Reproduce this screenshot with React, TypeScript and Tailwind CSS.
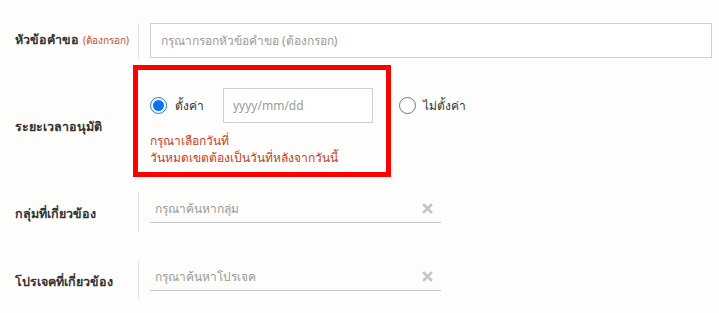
import React from 'react';

const ClearIcon = () => (
  <svg width="11" height="11" viewBox="0 0 11 11" className="text-[#c4c4c4]">
    <path d="M2 2 L9 9 M9 2 L2 9" stroke="currentColor" strokeWidth="2.6" strokeLinecap="square" />
  </svg>
);

const Radio = ({ checked }: { checked?: boolean }) => (
  <span
    className={
      checked
        ? 'flex items-center justify-center w-[17px] h-[17px] rounded-full border border-[#1a73e8] bg-white'
        : 'flex items-center justify-center w-[17px] h-[17px] rounded-full border border-[#767676] bg-white'
    }
  >
    {checked && <span className="block w-[11px] h-[11px] rounded-full bg-[#0b74f0]" />}
  </span>
);

const Label = ({ children, offset }: { children: React.ReactNode; offset?: boolean }) => (
  <div
    className={
      offset
        ? 'w-[138px] shrink-0 flex items-center pl-[15px] pt-[5px] text-[12.5px] font-bold text-[#333]'
        : 'w-[138px] shrink-0 flex items-center pl-[15px] text-[12.5px] font-bold text-[#333]'
    }
  >
    {children}
  </div>
);

const SearchInput = ({ placeholder }: { placeholder: string }) => (
  <div className="w-[291px] h-[28px] flex items-center justify-between border-b border-[#c8c8c8] pl-[5px] pr-[8px]">
    <span className="text-[12px] text-[#9a9a9a]">{placeholder}</span>
    <ClearIcon />
  </div>
);

export default function App() {
  return (
    <div
      className="w-[719px] h-[313px] bg-[#fdfdfb] pr-[7px] overflow-hidden"
      style={{ fontFamily: '"Noto Sans", "Liberation Sans", sans-serif' }}
    >
      {/* หัวข้อคำขอ */}
      <div className="flex h-[35px] mt-[23px]">
        <Label>
          หัวข้อคำขอ <span className="ml-1 text-[10px] font-normal text-[#c9453a]">(ต้องกรอก)</span>
        </Label>
        <div className="border-l border-[#e2e2e2] pl-[11px] flex-1">
          <div className="h-[35px] border border-[#cfcfcf] bg-white flex items-center px-[10px] text-[12px] text-[#9a9a9a]">
            กรุณากรอกหัวข้อคำขอ (ต้องกรอก)
          </div>
        </div>
      </div>

      {/* ระยะเวลาอนุมัติ */}
      <div className="flex mt-[30px] relative">
        <Label>ระยะเวลาอนุมัติ</Label>
        <div className="pl-[12px]">
          <div className="flex items-center h-[35px]">
            <Radio checked />
            <span className="ml-[8px] w-[48px] text-[12px] text-[#333]">ตั้งค่า</span>
            <div className="w-[150px] h-[35px] border border-[#cfcfcf] bg-white flex items-center px-[9px] text-[12px] text-[#9a9a9a]">
              yyyy/mm/dd
            </div>
            <span className="ml-[26px]">
              <Radio />
            </span>
            <span className="ml-[7px] text-[12px] text-[#333]">ไม่ตั้งค่า</span>
          </div>
          <div className="mt-[9px] text-[12px] leading-[17px] text-[#cc3a1e]">
            <div>กรุณาเลือกวันที่</div>
            <div>วันหมดเขตต้องเป็นวันที่หลังจากวันนี้</div>
          </div>
        </div>
        <div className="absolute left-[133px] top-[-23px] w-[258px] h-[112px] border-[5px] border-[#ff0000] pointer-events-none" />
      </div>

      {/* กลุ่มที่เกี่ยวข้อง */}
      <div className="flex h-[40px] mt-[26px]">
        <Label offset>กลุ่มที่เกี่ยวข้อง</Label>
        <div className="border-l border-[#e2e2e2] pl-[11px] pt-[3px]">
          <SearchInput placeholder="กรุณาค้นหากลุ่ม" />
        </div>
      </div>

      {/* โปรเจคที่เกี่ยวข้อง */}
      <div className="flex h-[38px] mt-[29px]">
        <Label offset>โปรเจคที่เกี่ยวข้อง</Label>
        <div className="border-l border-[#e2e2e2] pl-[11px] pt-[2px]">
          <SearchInput placeholder="กรุณาค้นหาโปรเจค" />
        </div>
      </div>
    </div>
  );
}
